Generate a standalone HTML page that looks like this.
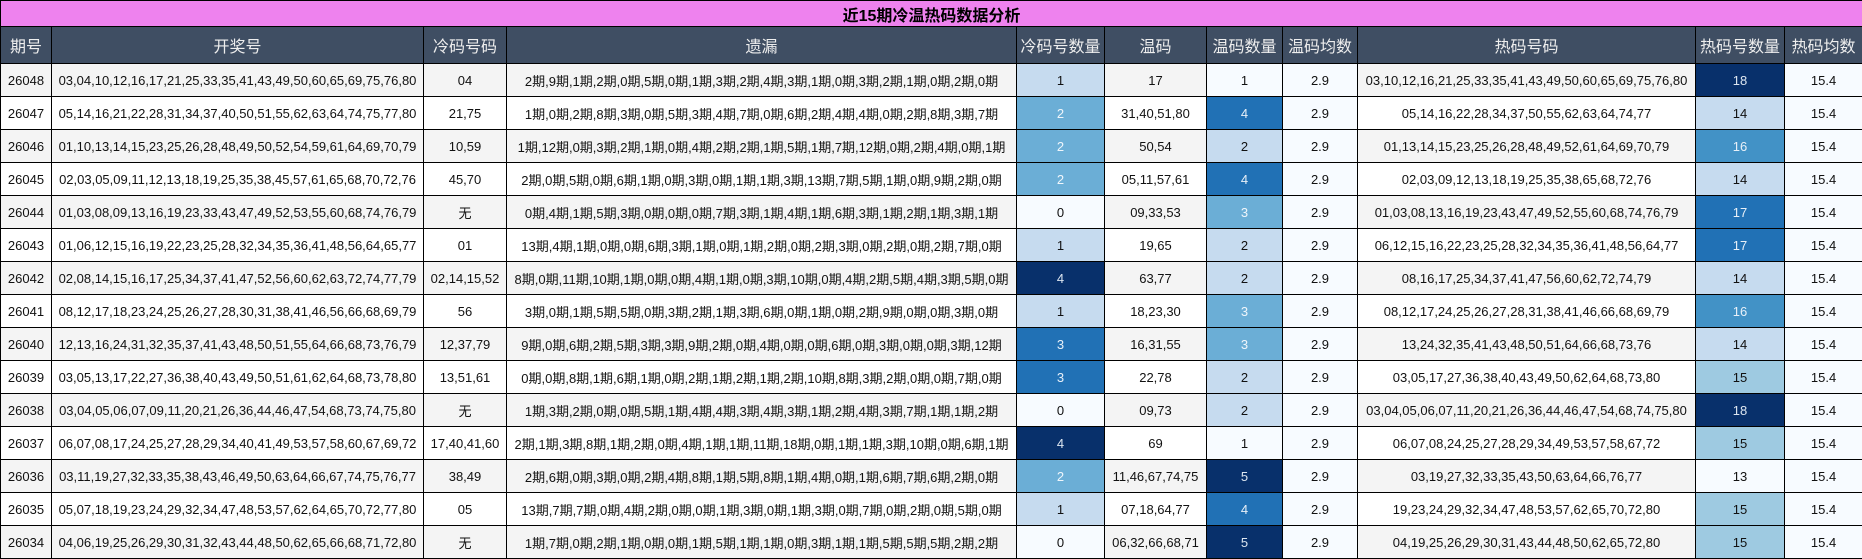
<!DOCTYPE html>
<html><head><meta charset="utf-8"><style>
html,body{margin:0;padding:0;background:#fff;}
body{width:1862px;height:559px;overflow:hidden;font-family:"Liberation Sans","Noto Sans CJK SC",sans-serif;}
table{border-collapse:collapse;table-layout:fixed;width:1862px;}
td,th{border:1px solid #000;text-align:center;padding:0;white-space:nowrap;overflow:hidden;font-size:13px;color:#111;}
.t td{background:#ee82ee;height:25px;font-weight:bold;font-size:16px;color:#000;}
.h th{background:#3f4e63;color:#eee;font-weight:normal;font-size:16px;height:36px;}
.r td{height:32px;}
.g{background:#f4f4f4;}
.w{background:#fff;}
.c0{background:#f7fbff;}
.c1{background:#c6dbef;}
.c2{background:#6baed6;color:#f0f6fb;}
.c3{background:#2171b5;color:#e8f0f8;}
.c4{background:#08306b;color:#dde6f0;}
.hb{background:#9ecae1;}
.h16{background:#4292c6;color:#e8f0f8;}
</style></head><body>
<table>
<colgroup>
<col style="width:51px"><col style="width:372px"><col style="width:83px"><col style="width:510px"><col style="width:88px"><col style="width:102px"><col style="width:76px"><col style="width:75px"><col style="width:338px"><col style="width:89px"><col style="width:78px">
</colgroup>
<tr class="t"><td colspan="11">近15期冷温热码数据分析</td></tr>
<tr class="h"><th>期号</th><th>开奖号</th><th>冷码号码</th><th>遗漏</th><th>冷码号数量</th><th>温码</th><th>温码数量</th><th>温码均数</th><th>热码号码</th><th>热码号数量</th><th>热码均数</th></tr>
<tr class="r"><td class="g">26048</td><td class="g">03,04,10,12,16,17,21,25,33,35,41,43,49,50,60,65,69,75,76,80</td><td class="g">04</td><td class="g">2期,9期,1期,2期,0期,5期,0期,1期,3期,2期,4期,3期,1期,0期,3期,2期,1期,0期,2期,0期</td><td class="c1">1</td><td class="g">17</td><td class="c0">1</td><td class="c0">2.9</td><td class="g">03,10,12,16,21,25,33,35,41,43,49,50,60,65,69,75,76,80</td><td class="c4">18</td><td class="c0">15.4</td></tr>
<tr class="r"><td class="w">26047</td><td class="w">05,14,16,21,22,28,31,34,37,40,50,51,55,62,63,64,74,75,77,80</td><td class="w">21,75</td><td class="w">1期,0期,2期,8期,3期,0期,5期,3期,4期,7期,0期,6期,2期,4期,4期,0期,2期,8期,3期,7期</td><td class="c2">2</td><td class="w">31,40,51,80</td><td class="c3">4</td><td class="c0">2.9</td><td class="w">05,14,16,22,28,34,37,50,55,62,63,64,74,77</td><td class="c1">14</td><td class="c0">15.4</td></tr>
<tr class="r"><td class="g">26046</td><td class="g">01,10,13,14,15,23,25,26,28,48,49,50,52,54,59,61,64,69,70,79</td><td class="g">10,59</td><td class="g">1期,12期,0期,3期,2期,1期,0期,4期,2期,2期,1期,5期,1期,7期,12期,0期,2期,4期,0期,1期</td><td class="c2">2</td><td class="g">50,54</td><td class="c1">2</td><td class="c0">2.9</td><td class="g">01,13,14,15,23,25,26,28,48,49,52,61,64,69,70,79</td><td class="h16">16</td><td class="c0">15.4</td></tr>
<tr class="r"><td class="w">26045</td><td class="w">02,03,05,09,11,12,13,18,19,25,35,38,45,57,61,65,68,70,72,76</td><td class="w">45,70</td><td class="w">2期,0期,5期,0期,6期,1期,0期,3期,0期,1期,1期,3期,13期,7期,5期,1期,0期,9期,2期,0期</td><td class="c2">2</td><td class="w">05,11,57,61</td><td class="c3">4</td><td class="c0">2.9</td><td class="w">02,03,09,12,13,18,19,25,35,38,65,68,72,76</td><td class="c1">14</td><td class="c0">15.4</td></tr>
<tr class="r"><td class="g">26044</td><td class="g">01,03,08,09,13,16,19,23,33,43,47,49,52,53,55,60,68,74,76,79</td><td class="g">无</td><td class="g">0期,4期,1期,5期,3期,0期,0期,0期,7期,3期,1期,4期,1期,6期,3期,1期,2期,1期,3期,1期</td><td class="c0">0</td><td class="g">09,33,53</td><td class="c2">3</td><td class="c0">2.9</td><td class="g">01,03,08,13,16,19,23,43,47,49,52,55,60,68,74,76,79</td><td class="c3">17</td><td class="c0">15.4</td></tr>
<tr class="r"><td class="w">26043</td><td class="w">01,06,12,15,16,19,22,23,25,28,32,34,35,36,41,48,56,64,65,77</td><td class="w">01</td><td class="w">13期,4期,1期,0期,0期,6期,3期,1期,0期,1期,2期,0期,2期,3期,0期,2期,0期,2期,7期,0期</td><td class="c1">1</td><td class="w">19,65</td><td class="c1">2</td><td class="c0">2.9</td><td class="w">06,12,15,16,22,23,25,28,32,34,35,36,41,48,56,64,77</td><td class="c3">17</td><td class="c0">15.4</td></tr>
<tr class="r"><td class="g">26042</td><td class="g">02,08,14,15,16,17,25,34,37,41,47,52,56,60,62,63,72,74,77,79</td><td class="g">02,14,15,52</td><td class="g">8期,0期,11期,10期,1期,0期,0期,4期,1期,0期,3期,10期,0期,4期,2期,5期,4期,3期,5期,0期</td><td class="c4">4</td><td class="g">63,77</td><td class="c1">2</td><td class="c0">2.9</td><td class="g">08,16,17,25,34,37,41,47,56,60,62,72,74,79</td><td class="c1">14</td><td class="c0">15.4</td></tr>
<tr class="r"><td class="w">26041</td><td class="w">08,12,17,18,23,24,25,26,27,28,30,31,38,41,46,56,66,68,69,79</td><td class="w">56</td><td class="w">3期,0期,1期,5期,5期,0期,3期,2期,1期,3期,6期,0期,1期,0期,2期,9期,0期,0期,3期,0期</td><td class="c1">1</td><td class="w">18,23,30</td><td class="c2">3</td><td class="c0">2.9</td><td class="w">08,12,17,24,25,26,27,28,31,38,41,46,66,68,69,79</td><td class="h16">16</td><td class="c0">15.4</td></tr>
<tr class="r"><td class="g">26040</td><td class="g">12,13,16,24,31,32,35,37,41,43,48,50,51,55,64,66,68,73,76,79</td><td class="g">12,37,79</td><td class="g">9期,0期,6期,2期,5期,3期,3期,9期,2期,0期,4期,0期,0期,6期,0期,3期,0期,0期,3期,12期</td><td class="c3">3</td><td class="g">16,31,55</td><td class="c2">3</td><td class="c0">2.9</td><td class="g">13,24,32,35,41,43,48,50,51,64,66,68,73,76</td><td class="c1">14</td><td class="c0">15.4</td></tr>
<tr class="r"><td class="w">26039</td><td class="w">03,05,13,17,22,27,36,38,40,43,49,50,51,61,62,64,68,73,78,80</td><td class="w">13,51,61</td><td class="w">0期,0期,8期,1期,6期,1期,0期,2期,1期,2期,1期,2期,10期,8期,3期,2期,0期,0期,7期,0期</td><td class="c3">3</td><td class="w">22,78</td><td class="c1">2</td><td class="c0">2.9</td><td class="w">03,05,17,27,36,38,40,43,49,50,62,64,68,73,80</td><td class="hb">15</td><td class="c0">15.4</td></tr>
<tr class="r"><td class="g">26038</td><td class="g">03,04,05,06,07,09,11,20,21,26,36,44,46,47,54,68,73,74,75,80</td><td class="g">无</td><td class="g">1期,3期,2期,0期,0期,5期,1期,4期,4期,3期,4期,3期,1期,2期,4期,3期,7期,1期,1期,2期</td><td class="c0">0</td><td class="g">09,73</td><td class="c1">2</td><td class="c0">2.9</td><td class="g">03,04,05,06,07,11,20,21,26,36,44,46,47,54,68,74,75,80</td><td class="c4">18</td><td class="c0">15.4</td></tr>
<tr class="r"><td class="w">26037</td><td class="w">06,07,08,17,24,25,27,28,29,34,40,41,49,53,57,58,60,67,69,72</td><td class="w">17,40,41,60</td><td class="w">2期,1期,3期,8期,1期,2期,0期,4期,1期,1期,11期,18期,0期,1期,1期,3期,10期,0期,6期,1期</td><td class="c4">4</td><td class="w">69</td><td class="c0">1</td><td class="c0">2.9</td><td class="w">06,07,08,24,25,27,28,29,34,49,53,57,58,67,72</td><td class="hb">15</td><td class="c0">15.4</td></tr>
<tr class="r"><td class="g">26036</td><td class="g">03,11,19,27,32,33,35,38,43,46,49,50,63,64,66,67,74,75,76,77</td><td class="g">38,49</td><td class="g">2期,6期,0期,3期,0期,2期,4期,8期,1期,5期,8期,1期,4期,0期,1期,6期,7期,6期,2期,0期</td><td class="c2">2</td><td class="g">11,46,67,74,75</td><td class="c4">5</td><td class="c0">2.9</td><td class="g">03,19,27,32,33,35,43,50,63,64,66,76,77</td><td class="c0">13</td><td class="c0">15.4</td></tr>
<tr class="r"><td class="w">26035</td><td class="w">05,07,18,19,23,24,29,32,34,47,48,53,57,62,64,65,70,72,77,80</td><td class="w">05</td><td class="w">13期,7期,7期,0期,4期,2期,0期,0期,1期,3期,0期,1期,3期,0期,7期,0期,2期,0期,5期,0期</td><td class="c1">1</td><td class="w">07,18,64,77</td><td class="c3">4</td><td class="c0">2.9</td><td class="w">19,23,24,29,32,34,47,48,53,57,62,65,70,72,80</td><td class="hb">15</td><td class="c0">15.4</td></tr>
<tr class="r"><td class="g">26034</td><td class="g">04,06,19,25,26,29,30,31,32,43,44,48,50,62,65,66,68,71,72,80</td><td class="g">无</td><td class="g">1期,7期,0期,2期,1期,0期,0期,1期,5期,1期,1期,0期,3期,1期,1期,5期,5期,5期,2期,2期</td><td class="c0">0</td><td class="g">06,32,66,68,71</td><td class="c4">5</td><td class="c0">2.9</td><td class="g">04,19,25,26,29,30,31,43,44,48,50,62,65,72,80</td><td class="hb">15</td><td class="c0">15.4</td></tr>
</table>
</body></html>
